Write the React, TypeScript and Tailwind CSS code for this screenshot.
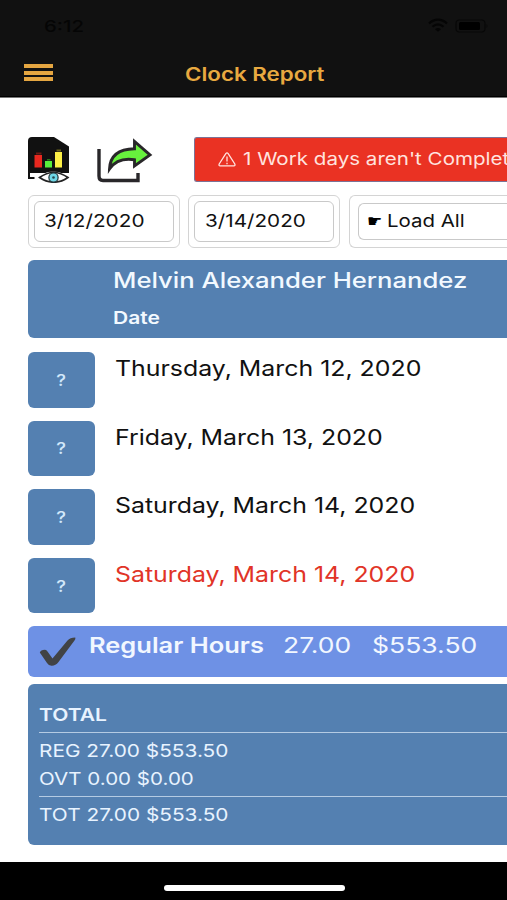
import React from 'react';

interface DayRowProps {
    label: string;
    isIncomplete?: boolean; // incomplete days are shown in red
}

const text = 'block w-max origin-left whitespace-nowrap';

const DayRow: React.FC<DayRowProps> = ({ label, isIncomplete }) => {
    return (
        <div className="flex h-[55.6px] gap-5">
            <button className="flex w-[67.500px] shrink-0 items-center justify-center rounded-[6px] bg-[#5480b1] text-[16px] font-medium text-[#d2e8fb]">
                <span className="scale-x-[1.15]">?</span>
            </button>
            <p className={`${text} scale-x-[1.168] text-[21.3px] leading-[33.500px] ${isIncomplete ? 'text-[#e13427]' : 'text-[#111]'}`}>
                {label}
            </p>
        </div>
    );
};

const StatusIcons: React.FC = () => (
    <svg width="62" height="16" viewBox="0 0 62 16" fill="none">
        <path d="M2 5.5C7.500 .3 14.500 .3 20 5.500" stroke="#050505" strokeWidth="2.300" />
        <path d="M5.500 8.800C9 5.700 13 5.700 16.500 8.800" stroke="#050505" strokeWidth="2.200" />
        <path d="M8 11.200Q11 8.800 14 11.200L11 13.800Z" fill="#050505" />
        <rect x="29" y="2" width="29" height="12" rx="3.500" stroke="#080808" strokeWidth="1.200" />
        <rect x="32" y="4" width="21" height="8" rx="1.500" fill="#000" />
        <path d="M59.500 6Q61.500 8 59.500 10Z" fill="#080808" />
    </svg>
);

const ReportIcon: React.FC = () => (
    <svg className="shrink-0" width="42" height="46" viewBox="0 0 42 46" fill="none">
        <path d="M4 0H26L41 9.500V36H0V4Q0 0 4 0Z" fill="#111" />
        <path d="M1 35V41H6.500" stroke="#111" strokeWidth="2" />
        <rect x="6.500" y="18" width="7.500" height="12.500" fill="#e8281f" />
        <path d="M8 17.500H13.500V15.500H8Z" fill="#6b1b15" />
        <rect x="17" y="24" width="7" height="6.500" fill="#58ed3b" />
        <path d="M19 23.500H22.500V22H19Z" fill="#28721d" />
        <rect x="27" y="15" width="7" height="15.500" fill="#fdf046" />
        <path d="M28.500 14.500H33V12.500H28.500Z" fill="#67611c" />
        <path d="M9 40.500Q18 34 25 34.800Q33 34 41 40.500Q34 46 25.500 46Q16 46 9 40.500Z" fill="#fff" />
        <path d="M11.500 40.500Q25.500 30.500 40 40.500Q26 50 11.500 40.500Z" stroke="#222" strokeWidth="1.600" />
        <circle cx="25.500" cy="40.500" r="4.600" fill="#6fd8e8" stroke="#243b40" strokeWidth="1.300" />
        <circle cx="25.500" cy="40.500" r="1.300" fill="#27474d" />
    </svg>
);

const ShareIcon: React.FC = () => (
    <svg className="shrink-0" width="56" height="46" viewBox="0 0 56 46" fill="none">
        <path d="M2 12V39Q2 43.500 6 43.500H41V36" stroke="#29272a" strokeWidth="3.400" />
        <path
            d="M12.500 32C13 20 20 12 37.500 11.700V4.500L53 18L37.500 29V22.800C26 21 18 24 12.500 32Z"
            fill="#67f13d"
            stroke="#29272a"
            strokeWidth="2.900"
        />
    </svg>
);

const WarningIcon: React.FC = () => (
    <svg className="-ml-px shrink-0" width="18" height="15" viewBox="0 0 18 15" fill="none" stroke="#ffe3df" strokeWidth="1.300">
        <path d="M7.800 1.600Q9 .2 10.200 1.600L16.800 12Q17.500 13.700 15.800 13.900H2.200Q.5 13.700 1.200 12Z" />
        <path d="M9 4.500V9.500M9 10.700V12.200" />
    </svg>
);

const App: React.FC = () => {
    return (
        <div className="flex h-[900px] w-full flex-col overflow-hidden bg-white font-['Inter',sans-serif]">
            {/* Header */}
            <header className="h-[98px] shrink-0 border-b border-[#777] bg-[#111] shadow-[inset_0_-1px_0_#000]">
                <div className="flex h-[52px] items-center justify-between pl-11 pr-[18px]">
                    <span className={`${text} scale-x-[1.27] text-[16px] font-medium text-[#050505]`}>6:12</span>
                    <StatusIcons />
                </div>
                <div className="flex h-[43px] items-center">
                    <button className="mb-[2px] ml-6 flex w-[28.500px] shrink-0 flex-col gap-[2.500px]">
                        <span className="h-[4px] bg-[#e5a641]" />
                        <span className="h-[4px] bg-[#e5a641]" />
                        <span className="h-[4px] bg-[#e5a641]" />
                    </button>
                    <h1 className={`${text} ml-[132px] mt-[2px] scale-x-[1.207] text-[18.5px] font-semibold text-[#e8a940]`}>Clock Report</h1>
                </div>
            </header>

            <main className="h-[764px] shrink-0 pl-[27.500px] pt-[39px]">
                <div className="flex h-[45px]">
                    <ReportIcon />
                    <div className="ml-[27px]">
                        <ShareIcon />
                    </div>
                    <div className="ml-[41px] flex flex-1 items-center overflow-hidden rounded-l-[3px] border border-r-0 border-[#7d7295] bg-[#ea3223] pl-6">
                        <WarningIcon />
                        <span className={`${text} ml-[7px] scale-x-[1.175] text-[17.500px] text-[#ffe3df]`}>1 Work days aren't Complet</span>
                    </div>
                </div>

                {/* Filters */}
                <div className="mt-[13px] flex h-[53px] gap-[8.500px]">
                    <div className="w-[152px] shrink-0 rounded-[6px] border border-[#d4d4d4] p-[5px]">
                        <div className="flex h-full items-center rounded-[6px] border border-[#c9c9c9] pl-[9.500px]">
                            <span className={`${text} scale-x-[1.175] text-[17.700px] text-[#111]`}>3/12/2020</span>
                        </div>
                    </div>
                    <div className="w-[152px] shrink-0 rounded-[6px] border border-[#d4d4d4] p-[5px]">
                        <div className="flex h-full items-center rounded-[6px] border border-[#c9c9c9] pl-[9.500px]">
                            <span className={`${text} scale-x-[1.170] text-[17.700px] text-[#111]`}>3/14/2020</span>
                        </div>
                    </div>
                    <div className="flex-1 rounded-l-[6px] border border-r-0 border-[#d4d4d4] py-[7px] pl-2">
                        <div className="flex h-full items-center rounded-l-[6px] border border-r-0 border-[#c9c9c9] pl-2">
                            <span className="w-5 text-[17px] leading-none text-black">☛</span>
                            <span className={`${text} scale-x-[1.155] text-[17.700px] text-[#111]`}>Load All</span>
                        </div>
                    </div>
                </div>

                {/* Employee */}
                <div className="mt-3 h-[78px] rounded-l-[6px] bg-[#5480b1] pl-[85.500px] pt-[5px] text-[#f2f9ff]">
                    <h2 className={`${text} scale-x-[1.233] text-[20.800px] font-medium leading-8`}>Melvin Alexander Hernandez</h2>
                    <p className={`${text} mt-[7px] scale-x-[1.235] text-[17px] font-semibold leading-7`}>Date</p>
                </div>

                <div className="mt-[14px] flex flex-col gap-[13px]">
                    <DayRow label="Thursday, March 12, 2020" />
                    <DayRow label="Friday, March 13, 2020" />
                    <DayRow label="Saturday, March 14, 2020" />
                    <DayRow label="Saturday, March 14, 2020" isIncomplete />
                </div>

                {/* Hours */}
                <div className="mt-[13px] flex h-[51px] rounded-l-[6px] bg-[#6e91e5] pl-[11px] text-[21.500px] leading-[39px] text-[#f2f7ff]">
                    <svg className="mt-[11px] shrink-0" width="37" height="30" viewBox="0 0 37 30" fill="#414345">
                        <path d="M.8 15.500Q1.500 13 6 12.700Q7.500 13 8.500 14.500L13.500 21.500L28.500 3.500Q31 .7 36.300 .6Q36.800 2 35.500 3.500L19.500 25Q16.500 29 12.500 28.800Q9.500 28.500 8 26Z" />
                    </svg>
                    <div className="ml-[13px] w-[194.500px] shrink-0">
                        <span className={`${text} scale-x-[1.185] font-semibold`}>Regular Hours</span>
                    </div>
                    <div className="w-[88.500px] shrink-0">
                        <span className={`${text} scale-x-[1.23]`}>27.00</span>
                    </div>
                    <span className={`${text} scale-x-[1.235]`}>$553.50</span>
                </div>

                {/* Totals */}
                <div className="mt-[7px] h-[161px] rounded-l-[6px] bg-[#5480b1] pl-[11.500px] pt-[14px] text-[17.500px] text-[#e8f3ff]">
                    <p className={`${text} scale-x-[1.235] text-[17px] font-semibold leading-[34px]`}>TOTAL</p>
                    <hr className="border-t-[1.500px] border-[#b5cbe3]" />
                    <div className="pt-1 leading-7">
                        <p className={`${text} scale-x-[1.19]`}>REG 27.00 $553.50</p>
                        <p className={`${text} scale-x-[1.175]`}>OVT 0.00 $0.00</p>
                    </div>
                    <hr className="mt-[3px] border-t-[1.500px] border-[#b5cbe3]" />
                    <p className={`${text} mt-1 scale-x-[1.19] leading-7`}>TOT 27.00 $553.50</p>
                </div>
            </main>

            {/* Home indicator */}
            <footer className="flex flex-1 justify-center bg-black pl-px pt-[23px]">
                <div className="h-[6px] w-[181px] rounded-full bg-white" />
            </footer>
        </div>
    );
};

export default App;
